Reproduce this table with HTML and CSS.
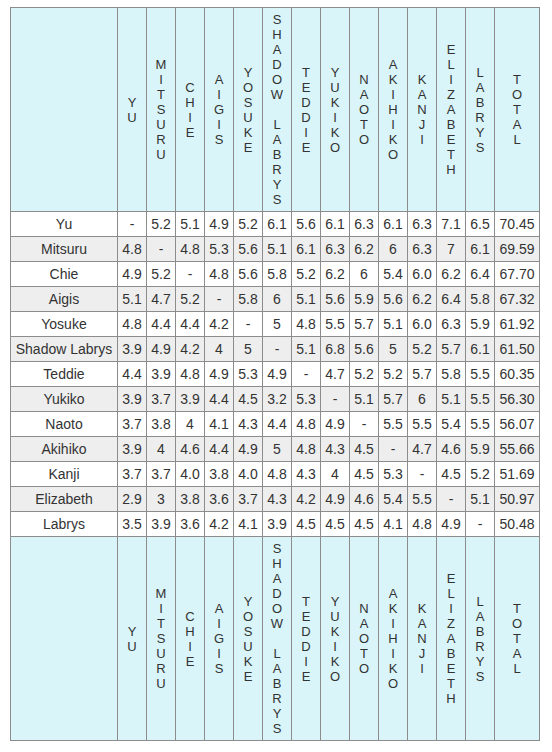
FILE: index.html
```html
<!DOCTYPE html>
<html>
<head>
<meta charset="utf-8">
<link rel="stylesheet" href="styles.css">
</head>
<body>
<div class="wrap">
<table class="grid">
<colgroup>
<col class="c-name">
<col class="c-num"><col class="c-num"><col class="c-num"><col class="c-num"><col class="c-num"><col class="c-num"><col class="c-num"><col class="c-num"><col class="c-num"><col class="c-num"><col class="c-num"><col class="c-num"><col class="c-num">
<col class="c-total">
</colgroup>
<thead>
<tr class="head">
<th></th>
<th>Y<br>U</th>
<th>M<br>I<br>T<br>S<br>U<br>R<br>U</th>
<th>C<br>H<br>I<br>E</th>
<th>A<br>I<br>G<br>I<br>S</th>
<th>Y<br>O<br>S<br>U<br>K<br>E</th>
<th>S<br>H<br>A<br>D<br>O<br>W<br><br>L<br>A<br>B<br>R<br>Y<br>S</th>
<th>T<br>E<br>D<br>D<br>I<br>E</th>
<th>Y<br>U<br>K<br>I<br>K<br>O</th>
<th>N<br>A<br>O<br>T<br>O</th>
<th>A<br>K<br>I<br>H<br>I<br>K<br>O</th>
<th>K<br>A<br>N<br>J<br>I</th>
<th>E<br>L<br>I<br>Z<br>A<br>B<br>E<br>T<br>H</th>
<th>L<br>A<br>B<br>R<br>Y<br>S</th>
<th>T<br>O<br>T<br>A<br>L</th>
</tr>
</thead>
<tbody>
<tr><td>Yu</td><td>-</td><td>5.2</td><td>5.1</td><td>4.9</td><td>5.2</td><td>6.1</td><td>5.6</td><td>6.1</td><td>6.3</td><td>6.1</td><td>6.3</td><td>7.1</td><td>6.5</td><td>70.45</td></tr>
<tr><td>Mitsuru</td><td>4.8</td><td>-</td><td>4.8</td><td>5.3</td><td>5.6</td><td>5.1</td><td>6.1</td><td>6.3</td><td>6.2</td><td>6</td><td>6.3</td><td>7</td><td>6.1</td><td>69.59</td></tr>
<tr><td>Chie</td><td>4.9</td><td>5.2</td><td>-</td><td>4.8</td><td>5.6</td><td>5.8</td><td>5.2</td><td>6.2</td><td>6</td><td>5.4</td><td>6.0</td><td>6.2</td><td>6.4</td><td>67.70</td></tr>
<tr><td>Aigis</td><td>5.1</td><td>4.7</td><td>5.2</td><td>-</td><td>5.8</td><td>6</td><td>5.1</td><td>5.6</td><td>5.9</td><td>5.6</td><td>6.2</td><td>6.4</td><td>5.8</td><td>67.32</td></tr>
<tr><td>Yosuke</td><td>4.8</td><td>4.4</td><td>4.4</td><td>4.2</td><td>-</td><td>5</td><td>4.8</td><td>5.5</td><td>5.7</td><td>5.1</td><td>6.0</td><td>6.3</td><td>5.9</td><td>61.92</td></tr>
<tr><td>Shadow Labrys</td><td>3.9</td><td>4.9</td><td>4.2</td><td>4</td><td>5</td><td>-</td><td>5.1</td><td>6.8</td><td>5.6</td><td>5</td><td>5.2</td><td>5.7</td><td>6.1</td><td>61.50</td></tr>
<tr><td>Teddie</td><td>4.4</td><td>3.9</td><td>4.8</td><td>4.9</td><td>5.3</td><td>4.9</td><td>-</td><td>4.7</td><td>5.2</td><td>5.2</td><td>5.7</td><td>5.8</td><td>5.5</td><td>60.35</td></tr>
<tr><td>Yukiko</td><td>3.9</td><td>3.7</td><td>3.9</td><td>4.4</td><td>4.5</td><td>3.2</td><td>5.3</td><td>-</td><td>5.1</td><td>5.7</td><td>6</td><td>5.1</td><td>5.5</td><td>56.30</td></tr>
<tr><td>Naoto</td><td>3.7</td><td>3.8</td><td>4</td><td>4.1</td><td>4.3</td><td>4.4</td><td>4.8</td><td>4.9</td><td>-</td><td>5.5</td><td>5.5</td><td>5.4</td><td>5.5</td><td>56.07</td></tr>
<tr><td>Akihiko</td><td>3.9</td><td>4</td><td>4.6</td><td>4.4</td><td>4.9</td><td>5</td><td>4.8</td><td>4.3</td><td>4.5</td><td>-</td><td>4.7</td><td>4.6</td><td>5.9</td><td>55.66</td></tr>
<tr><td>Kanji</td><td>3.7</td><td>3.7</td><td>4.0</td><td>3.8</td><td>4.0</td><td>4.8</td><td>4.3</td><td>4</td><td>4.5</td><td>5.3</td><td>-</td><td>4.5</td><td>5.2</td><td>51.69</td></tr>
<tr><td>Elizabeth</td><td>2.9</td><td>3</td><td>3.8</td><td>3.6</td><td>3.7</td><td>4.3</td><td>4.2</td><td>4.9</td><td>4.6</td><td>5.4</td><td>5.5</td><td>-</td><td>5.1</td><td>50.97</td></tr>
<tr><td>Labrys</td><td>3.5</td><td>3.9</td><td>3.6</td><td>4.2</td><td>4.1</td><td>3.9</td><td>4.5</td><td>4.5</td><td>4.5</td><td>4.1</td><td>4.8</td><td>4.9</td><td>-</td><td>50.48</td></tr>
</tbody>
<tfoot>
<tr class="head">
<th></th>
<th>Y<br>U</th>
<th>M<br>I<br>T<br>S<br>U<br>R<br>U</th>
<th>C<br>H<br>I<br>E</th>
<th>A<br>I<br>G<br>I<br>S</th>
<th>Y<br>O<br>S<br>U<br>K<br>E</th>
<th>S<br>H<br>A<br>D<br>O<br>W<br><br>L<br>A<br>B<br>R<br>Y<br>S</th>
<th>T<br>E<br>D<br>D<br>I<br>E</th>
<th>Y<br>U<br>K<br>I<br>K<br>O</th>
<th>N<br>A<br>O<br>T<br>O</th>
<th>A<br>K<br>I<br>H<br>I<br>K<br>O</th>
<th>K<br>A<br>N<br>J<br>I</th>
<th>E<br>L<br>I<br>Z<br>A<br>B<br>E<br>T<br>H</th>
<th>L<br>A<br>B<br>R<br>Y<br>S</th>
<th>T<br>O<br>T<br>A<br>L</th>
</tr>
</tfoot>
</table>
</div>
</body>
</html>
```
FILE: styles.css
```css
html, body {
  margin: 0;
  padding: 0;
  background: #ffffff;
}
.wrap {
  padding: 7px 0 0 10px;
}
.grid {
  border-collapse: collapse;
  table-layout: fixed;
  width: 529px;
  font-family: "Liberation Sans", Arial, sans-serif;
  color: #333333;
}
.c-name { width: 107px; }
.c-num { width: 29px; }
.c-total { width: 45px; }
.grid th,
.grid td {
  border: 1px solid #8c8c8c;
  text-align: center;
  vertical-align: middle;
  padding: 0;
}
.head th {
  background: #d9f5f9;
  font-weight: normal;
  font-size: 13px;
  line-height: 15px;
  padding: 4px 0;
  height: 195px;
}
.grid td {
  font-size: 14px;
  line-height: 16px;
  padding: 4px 0;
  white-space: nowrap;
}
.grid tbody tr:nth-child(even) td {
  background: #eeeeee;
}
```
